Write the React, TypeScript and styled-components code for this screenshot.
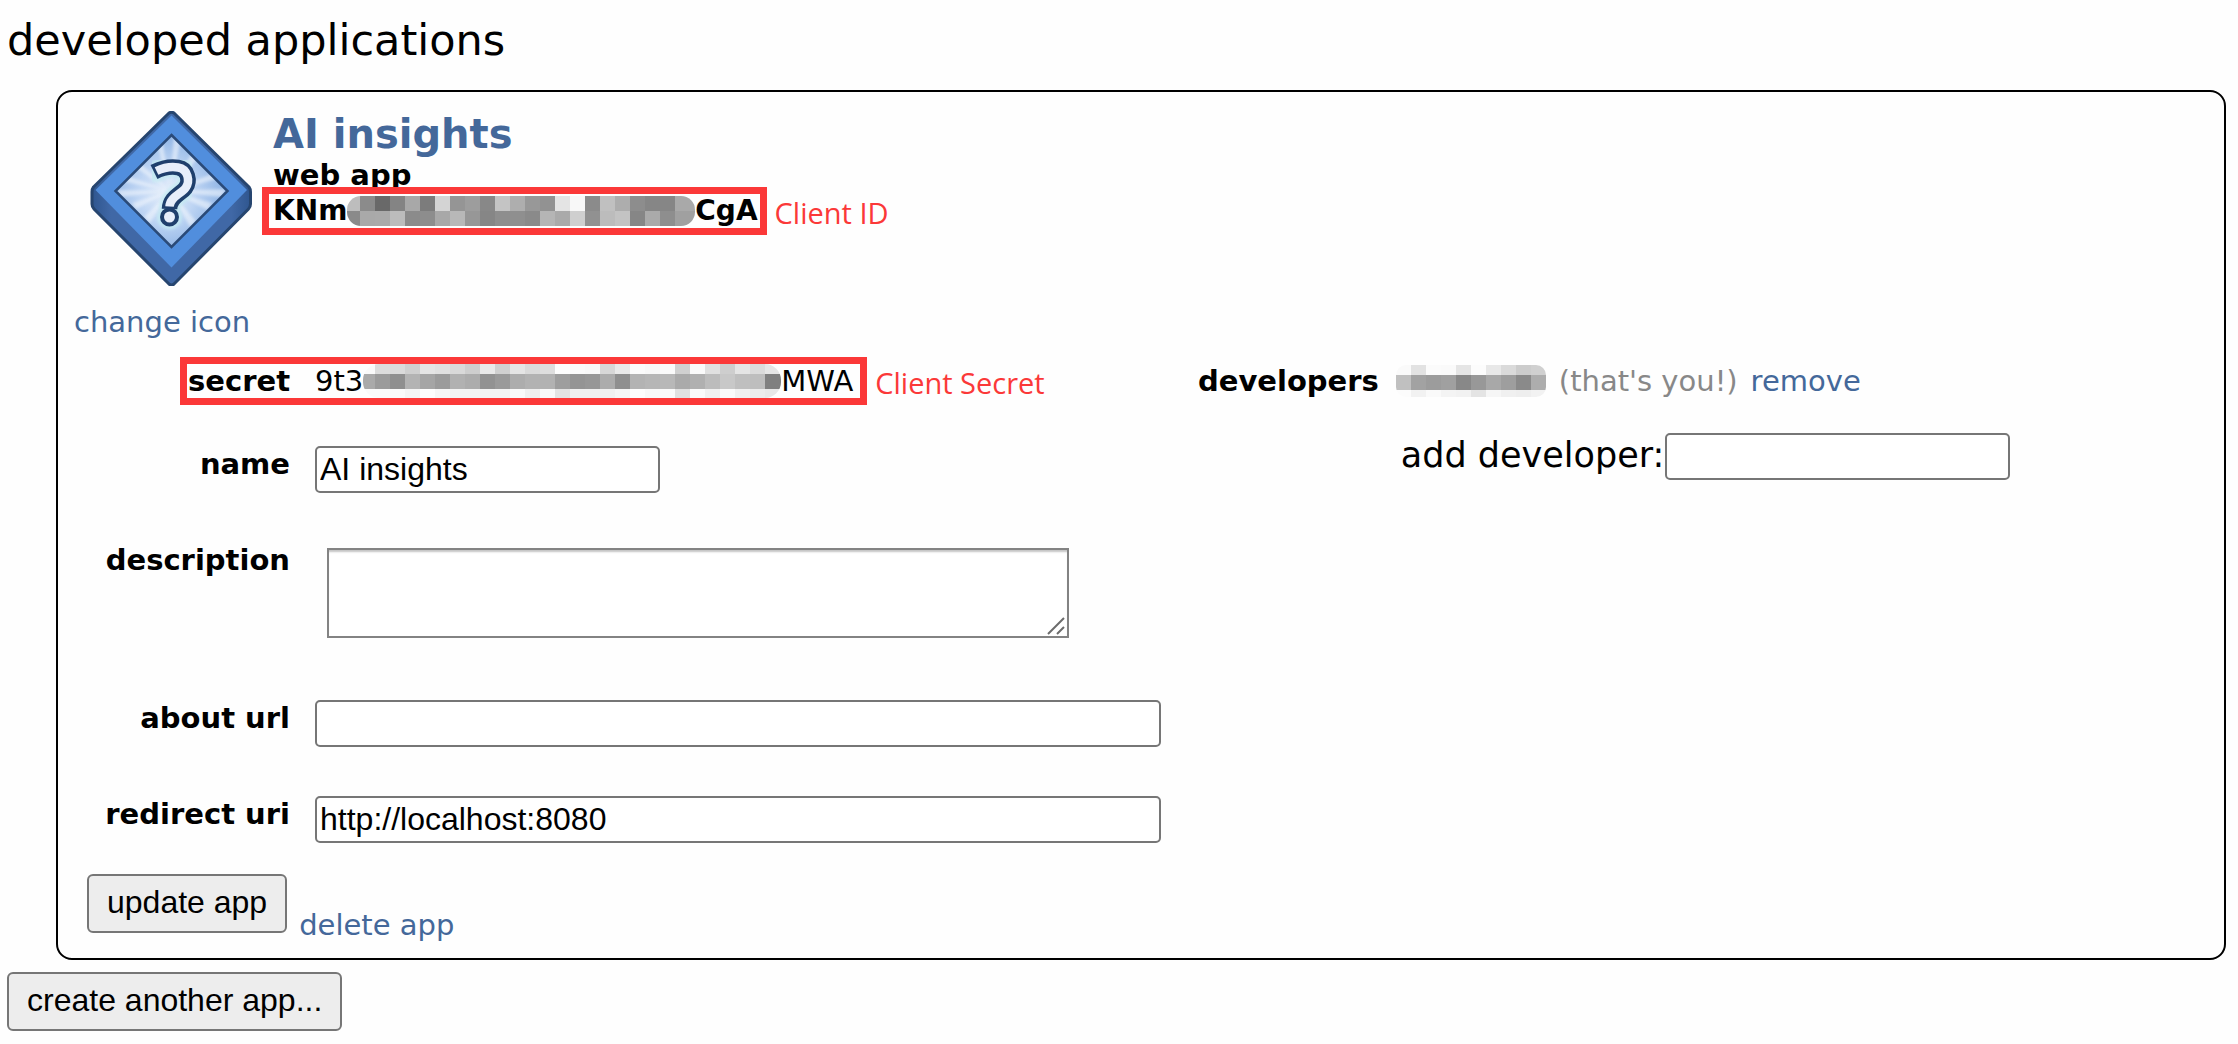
import React from "react";
import styled, { createGlobalStyle } from "styled-components";

const sans = `Verdana, "DejaVu Sans", sans-serif`;
const control = `Arial, "Liberation Sans", sans-serif`;
const note = `"Segoe UI", "Open Sans", "Noto Sans", sans-serif`;
const linkBlue = "#44689a";
const noteRed = "#fb3838";

const GlobalStyle = createGlobalStyle`
  *, *::before, *::after { box-sizing: border-box; }
  body { margin: 0; background: #fefefe; color: #000; font-family: ${sans}; font-size: 29px; line-height: 36px; }
`;

const Page = styled.main`
  padding: 15px 12px 12px 7px;
`;

const Heading = styled.h1`
  margin: 0 0 25px;
  font-size: 43px;
  line-height: 50px;
  font-weight: 400;
`;

const Card = styled.section`
  margin: 0 0 12px 49px;
  padding: 19px 16px 15px 0;
  border: 2px solid #000;
  border-radius: 16px;
`;

const Summary = styled.header`
  display: flex;
  align-items: flex-start;
  gap: 21px;
  padding-left: 16px;
  margin-bottom: 23px;
`;

const IconColumn = styled.div`
  display: flex;
  flex-direction: column;
  align-items: flex-end;
  gap: 18px;
  width: 178px;
`;

const IconLinkRow = styled.div`
  align-self: flex-start;
  white-space: nowrap;
`;

const Link = styled.a`
  color: ${linkBlue};
  text-decoration: none;
`;

const Identity = styled.div`
  display: flex;
  flex-direction: column;
  align-items: flex-start;
  font-weight: 700;
  line-height: 36px;
`;

const AppTitle = styled.h2`
  margin: 0;
  font-size: 40px;
  line-height: 46px;
`;

const Value = styled.div<{ $size?: number }>`
  position: relative;
  display: flex;
  align-items: center;
  width: fit-content;
  white-space: nowrap;
  font-size: ${(p) => p.$size ?? 29}px;
`;

const Frame = styled.div<{ $left: number; $right: number }>`
  position: absolute;
  inset: -6px ${(p) => -p.$right}px -6px ${(p) => -p.$left}px;
  border: 7px solid ${noteRed};
  pointer-events: none;
`;

const FrameNote = styled.span`
  position: absolute;
  left: 100%;
  top: 0;
  bottom: 0;
  display: flex;
  align-items: center;
  padding: 3px 0 0 15px;
  color: ${noteRed};
  font-family: ${note};
  font-size: 29px;
  font-weight: 400;
`;

const Columns = styled.div`
  display: flex;
  align-items: flex-start;
  gap: 37px;
`;

const Fields = styled.div`
  flex: 0 1 1103px;
  min-width: 0;
`;

const Row = styled.div`
  display: grid;
  grid-template-columns: 232px minmax(0, 1fr);
  column-gap: 25px;
  align-items: start;
  margin-bottom: 49px;

  &:first-child { margin-bottom: 47px; }
  &:last-child { margin-bottom: 31px; }
`;

const Label = styled.label`
  font-weight: 700;
  text-align: right;
  white-space: nowrap;
`;

const TextInput = styled.input<{ $short?: boolean }>`
  display: block;
  width: ${(p) => (p.$short ? "345px" : "100%")};
  height: 47px;
  padding: 0 3px;
  border: 2px solid #767676;
  border-radius: 5px;
  background: #fff;
  color: #000;
  font-family: ${control};
  font-size: 32px;
`;

const DescriptionBox = styled.div`
  position: relative;
  width: 742px;
  max-width: 100%;
  margin: 6px 0 13px 12px;
`;

const TextArea = styled.textarea`
  display: block;
  width: 100%;
  height: 90px;
  padding: 4px;
  border: 2px solid #838383;
  border-radius: 0;
  background: #fff;
  box-shadow: inset 0 3px 2px -1px #c4c4c4;
  font-family: ${control};
  font-size: 32px;
  resize: none;
`;

const Grip = styled.svg`
  position: absolute;
  right: 4px;
  bottom: 3px;
  pointer-events: none;
`;

const Developers = styled.div`
  flex: 1;
  display: flex;
  align-items: flex-start;
  gap: 17px;
  white-space: nowrap;
`;

const DeveloperList = styled.div`
  display: flex;
  flex-direction: column;
  gap: 34px;
`;

const DeveloperLine = styled.div`
  display: flex;
  align-items: center;
  gap: 13px;
`;

const Muted = styled.span`
  color: #888;
`;

const AddDeveloper = styled.div`
  display: flex;
  align-items: flex-start;
  gap: 1px;
  padding-left: 5px;
`;

const AddLabel = styled.label`
  font-size: 35px;
  line-height: 44px;
`;

const Strong = styled.span`
  font-weight: 700;
`;

const Actions = styled.div`
  display: flex;
  align-items: flex-end;
  gap: 12px;
  padding-left: 29px;
`;

const ActionButton = styled.button`
  padding: 0 18px 4px;
  height: 59px;
  border: 2px solid #767676;
  border-radius: 6px;
  background: #ededed;
  color: #000;
  font-family: ${control};
  font-size: 32px;
  line-height: 36px;

  ${Actions} & { margin-bottom: 10px; }
`;

const MosaicSvg = styled.svg<{ $radius: number }>`
  flex: none;
  display: block;
  border-radius: ${(p) => p.$radius}px;
`;

type Band = { y: number; height: number; shades: string };

/* Each shade is one two-digit grey level; cells are 15px wide. */
function Mosaic({ bands, start, width, radius }: { bands: Band[]; start: number; width: number; radius: number }) {
  const height = bands.reduce((sum, b) => sum + b.height, 0);
  return (
    <MosaicSvg $radius={radius} width={width} height={height} viewBox={`${start} 0 ${width} ${height}`} shapeRendering="crispEdges" aria-hidden="true">
      {bands.map((band) => {
        const cells = band.shades.split(" ");
        return cells.map((s, i) => (
          <rect
            key={`${band.y}-${i}`}
            x={i * 15}
            y={band.y}
            width={i === cells.length - 1 ? 30 : 15}
            height={band.height}
            fill={`#${s}${s}${s}`}
          />
        ));
      })}
    </MosaicSvg>
  );
}

const idBands: Band[] = [
  { y: 0, height: 15, shades: "bd 8b 69 84 a8 7c d4 95 9d 88 c4 ae 98 92 e4 f8 8b c0 ad 8d 86 86 a9" },
  { y: 15, height: 15, shades: "8a a9 aa bc 8b 8d a8 b8 97 86 8e 8f 8a b5 aa cf 91 bc c3 86 aa 8e a0" },
];

const secretBands: Band[] = [
  { y: 0, height: 10, shades: "fa dc da cf e4 e0 d9 ce e9 d0 e5 da de fd fa f8 d7 e9 fb f8 fa d0 fa e0 ce e5 db e6" },
  { y: 10, height: 15, shades: "aa 9b 8f b3 a5 9b b1 ac 92 9a ad b2 b2 9e 94 97 ac 8f b3 b6 b8 aa b0 bc c8 bf be 80" },
  { y: 25, height: 9, shades: "fa fa fa f4 fd f6 f3 f3 f3 f3 f9 ef f9 e3 f0 f0 f0 f5 fd f8 fa e0 fa f0 fa f0 ec e8" },
];

const developerBands: Band[] = [
  { y: 0, height: 10, shades: "fa e2 fb fa e5 fc e8 da cc d0" },
  { y: 10, height: 15, shades: "c0 a2 9c a0 88 98 a8 9e 8a ad" },
  { y: 25, height: 7, shades: "fc f2 fa f4 f2 e4 f6 f0 ee f2" },
];

function AppIcon() {
  return (
    <svg width="162" height="175" viewBox="0 0 162 175" role="img" aria-label="app icon">
      <defs>
        <radialGradient id="glow" cx="45%" cy="52%" r="50%">
          <stop offset="0" stopColor="#e6effb" />
          <stop offset="0.5" stopColor="#c0d6f4" />
          <stop offset="1" stopColor="#93b7e6" />
        </radialGradient>
        <linearGradient id="edge" x1="0" x2="1" y1="0" y2="0">
          <stop offset="0" stopColor="#2f568f" />
          <stop offset="0.12" stopColor="#4068a6" />
          <stop offset="0.88" stopColor="#4068a6" />
          <stop offset="1" stopColor="#2f568f" />
        </linearGradient>
        <filter id="soft" x="-10%" y="-10%" width="120%" height="120%"><feGaussianBlur stdDeviation="1.5" /></filter>
        <clipPath id="pane"><path d="M81.5 24L137.5 80L81.5 136L25.5 80Z" /></clipPath>
      </defs>
      <path d="M79 2Q81.5 .5 84 2L159 76Q160.500 78 160.500 81V93Q160.500 96 158.500 98L84 173Q81.500 175 79 173L4 98Q2 96 2 93V81Q2 78 3.500 76Z" fill="url(#edge)" stroke="#26456f" strokeWidth="3" strokeLinejoin="round" />
      <path d="M81.5 4.500L157 79L81.500 156.500L5.500 79Z" fill="#518edd" />
      <path d="M81.5 24L137.5 80L81.5 136L25.5 80Z" fill="url(#glow)" />
      <g clipPath="url(#pane)">
        <g fill="#f1f6fd" opacity="0.6" filter="url(#soft)">
          <path d="M80 80L34 64L31 70Z" /><path d="M80 80L28 79L30 86Z" />
          <path d="M80 80L42 92L46 98Z" /><path d="M80 80L54 106L60 112Z" />
          <path d="M80 80L50 52L46 57Z" /><path d="M80 80L72 26L66 30Z" />
          <path d="M80 80L84 22L91 28Z" /><path d="M80 80L103 40L109 46Z" />
          <path d="M80 80L124 62L128 68Z" /><path d="M80 80L136 78L132 86Z" />
          <path d="M80 80L122 92L118 99Z" /><path d="M80 80L106 110L100 116Z" />
        </g>
      </g>
      <path d="M81.5 24L137.5 80L81.5 136L25.5 80Z" fill="none" stroke="#2a4a78" strokeWidth="2.5" />
      <g fill="none" strokeLinejoin="round">
        <g filter="url(#soft)" opacity="0.85">
          <path d="M66 60.500C74 56 82 55.500 88 56.500C98 58 100.500 70 95.500 77C91 83 80 86 79.500 97" stroke="#c4eaf2" strokeWidth="21" strokeLinecap="round" />
          <circle cx="79.5" cy="106" r="12.5" fill="#c4eaf2" />
        </g>
        <path d="M64 61C74 56 82 55.500 88 56.500C98 58 100.500 70 95.500 77C91 83 80 86 79.500 98" stroke="#1f3f6c" strokeWidth="15.5" />
        <path d="M66.500 60C74 56.500 82 55.500 88 56.500C98 58 100.500 70 95.500 77C91 83 80 86 79.500 95.500" stroke="#e7eefa" strokeWidth="8.5" />
        <circle cx="79.5" cy="106" r="7.5" fill="#e7eefa" stroke="#1f3f6c" strokeWidth="4" />
      </g>
    </svg>
  );
}

export default function App() {
  return (
    <>
      <GlobalStyle />
      <Page>
        <Heading>developed applications</Heading>
        <Card>
          <Summary>
            <IconColumn>
              <AppIcon />
              <IconLinkRow><Link href="#icon">change icon</Link></IconLinkRow>
            </IconColumn>
            <Identity>
              <AppTitle><Link href="#app">AI insights</Link></AppTitle>
              <span>web app</span>
              <Value $size={28}>
                KNm
                <Mosaic bands={idBands} start={2} width={348} radius={14} />
                CgA
                <Frame $left={11} $right={9}>
                  <FrameNote>Client ID</FrameNote>
                </Frame>
              </Value>
            </Identity>
          </Summary>

          <Columns>
            <Fields>
              <Row>
                <Label as="span">secret</Label>
                <Value>
                  9t3
                  <Mosaic bands={secretBands} start={3} width={418} radius={16} />
                  MWA
                  <Frame $left={135} $right={14}>
                    <FrameNote>Client Secret</FrameNote>
                  </Frame>
                </Value>
              </Row>
              <Row>
                <Label htmlFor="name">name</Label>
                <TextInput id="name" $short defaultValue="AI insights" />
              </Row>
              <Row>
                <Label htmlFor="description">description</Label>
                <DescriptionBox>
                  <TextArea id="description" />
                  <Grip width="18" height="18" viewBox="0 0 18 18" stroke="#6c6c6c" strokeWidth="2" aria-hidden="true">
                    <path d="M1 17L17 1M10 17L17 10" />
                  </Grip>
                </DescriptionBox>
              </Row>
              <Row>
                <Label htmlFor="about">about url</Label>
                <TextInput id="about" />
              </Row>
              <Row>
                <Label htmlFor="redirect">redirect uri</Label>
                <TextInput id="redirect" defaultValue="http://localhost:8080" />
              </Row>
            </Fields>

            <Developers>
              <Strong>developers</Strong>
              <DeveloperList>
                <DeveloperLine>
                  <Mosaic bands={developerBands} start={0} width={150} radius={10} />
                  <Muted>(that's you!)</Muted>
                  <Link href="#remove">remove</Link>
                </DeveloperLine>
                <AddDeveloper>
                  <AddLabel htmlFor="developer">add developer:</AddLabel>
                  <TextInput id="developer" $short />
                </AddDeveloper>
              </DeveloperList>
            </Developers>
          </Columns>

          <Actions>
            <ActionButton type="submit">update app</ActionButton>
            <Link href="#delete">delete app</Link>
          </Actions>
        </Card>
        <ActionButton type="button">create another app...</ActionButton>
      </Page>
    </>
  );
}
